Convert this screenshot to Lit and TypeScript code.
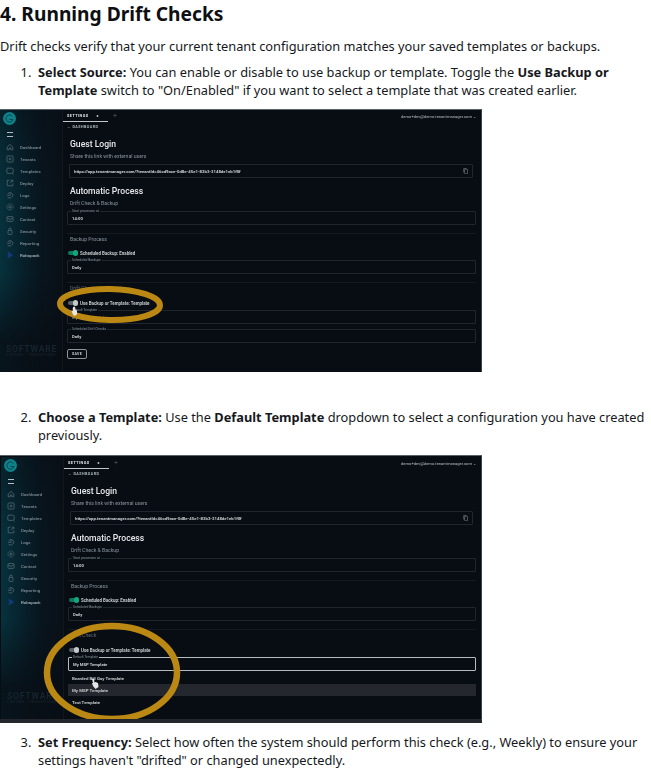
import { LitElement, html, css, svg } from "lit";
import { customElement, property } from "lit/decorators.js";

const icons = [
  svg`<path d="M1.5 5 5 1.800 8.500 5v3.500H6V6.200H4v2.300H1.500z"/>`,
  svg`<rect x="1.200" y="1.200" width="7.600" height="7.600" rx="1"/><path d="M5 3.300v3.400M3.300 5h3.400"/>`,
  svg`<path d="M2.500 1.500h4.500a2 2 0 0 1 2 2v2.500a2 2 0 0 1-2 2H2.500a1.500 1.500 0 0 1-1.500-1.500v-3a2.500 2.500 0 0 1 1.500-2.500z"/><path d="M8 8 9.500 9.500"/>`,
  svg`<path d="M8.500 5.500v3h-7v-7h3M5 5l3.500-3.500M6 1.500h2.500V4"/>`,
  svg`<path d="M2 4a3.300 3.300 0 1 1 5.500 3.500"/><path d="M1.500 5.500h4M2 8.500h5M5 3v2"/>`,
  svg`<circle cx="5" cy="5" r="1.500"/><circle cx="5" cy="5" r="3.800" stroke-dasharray="1.500 .6"/>`,
  svg`<rect x="1.200" y="2" width="7.600" height="6" rx="1"/><path d="m1.500 3.500 3.500 2.200 3.500-2.200"/>`,
  svg`<rect x="2.500" y="4.300" width="5" height="5" rx="1"/><path d="M3.500 4.300V2.800a1.500 1.500 0 0 1 3 0v1.500"/>`,
  svg`<path d="M2 4a3.300 3.300 0 1 1 5.500 3.500"/><path d="M1.500 5.500h4M2 8.500h5M5 3v2"/>`,
  svg`<path class="play" d="M2.500 1 8.500 5l-6 4z"/>`,
];
const nav = ["Dashboard", "Tenants", "Templates", "Deploy", "Logs", "Settings", "Contact", "Security", "Reporting", "Robopack"];

@customElement("app-shot")
class AppShot extends LitElement {
  @property({ type: Boolean }) open = false;
  static styles = css`
    :host { display: block; width: 482px; background: #fff; }
    .frame { position: relative; display: grid; grid-template-columns: 63px 1fr; background: #080d14; overflow: hidden; line-height: normal;
      border-top: 1px solid #59626b; border-right: 1px solid #3a424a; box-sizing: border-box; font-family: Roboto, sans-serif; color: #dfe3e6; filter: blur(.5px); }
    .frame.open { height: 268px; padding: 1px 0 0 1px; border-bottom: 4px solid #23272c; }
    .frame.closed { height: 263px; }
    aside { background: linear-gradient(180deg, rgba(8,13,20,.45) 0, rgba(8,13,20,0) 30%, rgba(8,13,20,0) 62%, rgba(8,13,20,.8) 88%),
        linear-gradient(90deg, #06323d 0%, #07212c 35%, #08151e 65%, #0a1018 100%); border-right: 1px solid #11171e;
      display: flex; flex-direction: column; position: relative; }
    .logo { width: 13px; height: 13px; margin: 2px 0 0 3px; display: block; }
    .burger { width: 6px; height: 3px; margin: 7px 0 0 7px; border-top: 1px solid #b4bcc2; border-bottom: 1px solid #b4bcc2; }
    ul { list-style: none; margin: 4px 0 0; padding: 0; }
    li { height: 12.05px; display: flex; align-items: center; gap: 6.500px; padding-left: 5.500px; font-size: 4.400px; font-weight: 500; color: #7f8c94; }
    li svg { width: 8px; height: 8px; fill: none; stroke: #66767e; stroke-width: .8; flex: none; }
    li svg .play { fill: #123a78; stroke: #123a78; }
    li.last { color: #a6b0b6; }
    .mark { position: absolute; left: 6px; top: 236px; font: 700 8.500px/7px Roboto, sans-serif; letter-spacing: .85px; color: #17242d; white-space: nowrap; }
    .mark small { display: block; font: 500 3px/4px Roboto, sans-serif; letter-spacing: .7px; color: #1c2831; }
    main { padding-right: 5px; display: flex; flex-direction: column; position: relative; min-width: 0; }
    .top { height: 12px; display: flex; align-items: center; justify-content: space-between; }
    .tabs { display: flex; gap: 5px; align-items: center; color: #626c73; font-size: 7px; font-weight: 300; }
    .tab { width: 45px; height: 12px; box-sizing: border-box; padding-left: 4px; border-bottom: 1px solid #c2c7cb; display: flex; align-items: center; gap: 8px;
      color: #dfe3e6; font-size: 3.800px; font-weight: 700; letter-spacing: .45px; }
    .user { font-size: 4.100px; color: #b7bec3; white-space: nowrap; }
    .crumb { height: 10px; display: flex; align-items: center; padding-left: 4px; gap: 3px; font-size: 3.700px; font-weight: 700; letter-spacing: .45px; color: #aeb6bb; }
    .content { padding-left: 4px; display: flex; flex-direction: column; }
    h2 { margin: 0 0 0 3px; font-size: 8.600px; font-weight: 500; color: #e6e9eb; line-height: 12px; }
    h2.first { margin-top: 6px; }
    h2.second { margin-top: 7px; }
    .sub { margin: 2px 0 0 3px; font-size: 5.150px; color: #8a949b; line-height: 8px; white-space: nowrap; }
    .sub.head { margin-top: 1px; }
    .dim { color: #5f676d; }
    .field { height: 14px; box-sizing: border-box; border: 1px solid #20262d; border-radius: 1px; display: flex; align-items: center; justify-content: space-between;
      padding: 0 4px; position: relative; font-size: 4.200px; font-weight: 700; color: #c8cdd0; margin-top: 3px; }
    .field b { position: absolute; left: 3px; top: -2px; background: #080d14; padding: 0 1px; font-size: 3.300px; line-height: 3px; font-weight: 400; color: #8a949b; }
    .field.url { margin: 4px 3px 0 2px; font-size: 4.270px; white-space: nowrap; }
    .url svg { width: 5px; height: 6px; fill: none; stroke: #9ea6ab; stroke-width: .8; }
    .f1 { margin-top: 4px; }
    .f4 { margin-top: 5px; }
    .faded { color: #7c8286; }
    .rule { height: 1px; background: #141a20; margin-top: 8px; }
    .toggle { height: 8px; display: flex; align-items: center; gap: 2px; font-size: 4.450px; font-weight: 700; color: #c4c9cc; padding-left: 1px; white-space: nowrap; }
    .sw { width: 10px; height: 3.500px; border-radius: 2px; position: relative; background: #0c7a60; }
    .sw::after { content: ""; position: absolute; right: 0; top: -1px; width: 5.500px; height: 5.500px; border-radius: 50%; background: #14a67c; }
    .sw.off { background: #5a6167; }
    .sw.off::after { background: #c5c9cc; }
    .t1 { margin-top: 6px; }
    .t2 { margin-top: 7px; }
    .save { margin-top: 6px; width: 20px; height: 10px; box-sizing: border-box; border: 1px solid #8d959a; border-radius: 2px; display: grid; place-items: center; font-size: 3.600px; font-weight: 700; letter-spacing: .3px; color: #c7ccd0; }
    .active { border-color: #b4babe; }
    .menu { margin-top: 1px; font-size: 4.400px; font-weight: 700; color: #bfc4c8; }
    .menu div { height: 12px; display: flex; align-items: center; padding-left: 4px; }
    .menu .sel { background: #24282e; }
    .ring { position: absolute; left: 0; top: 0; pointer-events: none; fill: none; stroke: #ba8813; }
    .hand { fill: #e4e6e8; stroke: none; }
  `;
  render() {
    const o = this.open;
    return html`<div class="frame ${o ? "open" : "closed"}">
      <aside>
        <svg class="logo" viewBox="0 0 13 13"><circle cx="6.500" cy="6.500" r="6.500" fill="#0e8288"/><path d="M9.500 4.500A3.600 3.600 0 1 0 10 7.500H6.500" fill="none" stroke="#0b4550" stroke-width="1"/></svg>
        <div class="burger"></div>
        <ul>${nav.map((n, i) => html`<li class=${i === 9 ? "last" : ""}><svg viewBox="0 0 10 10">${icons[i]}</svg>${n}</li>`)}</ul>
        <div class="mark">SOFTWARE<small>CONTROL · TRANSITIONS</small></div>
      </aside>
      <main>
        <div class="top">
          <div class="tabs"><div class="tab">SETTINGS <span>x</span></div>+</div>
          <div class="user">demo+dev@demo.tenantmanager.com ⌄</div>
        </div>
        <div class="crumb">← DASHBOARD</div>
        <div class="content">
          <h2 class="first">Guest Login</h2>
          <p class="sub">Share this link with external users</p>
          <div class="field url">https://app.tenantmanager.com/?tenantId=46cd9ace-0d8e-45e1-83b3-3148de1eb1f0f
            <svg viewBox="0 0 8 10"><rect x="2.500" y="2" width="5" height="7.500" rx="1"/><path d="M1 7.500V1h4.500"/></svg></div>
          <h2 class="second">Automatic Process</h2>
          <p class="sub">Drift Check &amp; Backup</p>
          <div class="field f1"><b>Start processes at</b>14:00</div>
          <div class="rule"></div>
          <p class="sub head">Backup Process</p>
          <div class="toggle t1"><span class="sw"></span>Scheduled Backup: Enabled</div>
          <div class="field"><b>Scheduled Backups</b>Daily</div>
          <div class="rule"></div>
          <p class="sub head dim">Drift Check</p>
          <div class="toggle t2"><span class="sw off"></span>Use Backup or Template: Template</div>
          <div class="field ${o ? "active" : "faded"}"><b>Default Template</b>My MSP Template</div>
          ${o
            ? html`<div class="menu"><div>Bearded Bill Guy Template</div><div class="sel">My MSP Template</div><div>Test Template</div></div>`
            : html`<div class="field f4"><b>Scheduled Drift Checks</b>Daily</div><div class="save">SAVE</div>`}
        </div>
      </main>
      ${o
        ? svg`<svg class="ring" width="482" height="268" stroke-width="6.500"><ellipse cx="112" cy="216.500" rx="65" ry="46.500"/><path class="hand" d="M92 223l2-.500.500 4 1-.500 2.500 1 .500 4-3 2-2.500-3-1-3 1 0z"/></svg>`
        : svg`<svg class="ring" width="482" height="263" stroke-width="6"><ellipse cx="110" cy="194.500" rx="50" ry="15.500" transform="rotate(1 110 194.500)"/><path class="hand" d="M73 197l2-.500.500 3 1.500 1 0 4-3 1.500-1.500-2.500-1-3 1.500.500z"/></svg>`}
    </div>`;
  }
}

@customElement("app-root")
class AppRoot extends LitElement {
  static styles = css`
    :host { display: block; width: 651px; height: 768px; overflow: hidden; background: #fff; color: #16181c; font-family: "Noto Sans", sans-serif; font-size: 12.800px; line-height: 18px; }
    h1 { margin: 0; padding-top: 2px; font-size: 19.200px; line-height: 24px; font-weight: 700; color: #0d0f12; }
    p { margin: 11px 0 0; }
    ol { margin: 8px 0 0; padding: 0 0 0 38px; }
    li::marker { content: counter(list-item) ".  "; }
    b { font-weight: 700; }
    .a { margin: 10px 0 36px -38px; }
    .b { margin: 11px 0 10px -38px; }
  `;
  render() {
    return html`
      <h1>4. Running Drift Checks</h1>
      <p>Drift checks verify that your current tenant configuration matches your saved templates or backups.</p>
      <ol>
        <li><b>Select Source:</b> You can enable or disable to use backup or template. Toggle the <b>Use Backup or Template</b> switch to "On/Enabled" if you want to select a template that was created earlier.
          <app-shot class="a"></app-shot></li>
        <li><b>Choose a Template:</b> Use the <b>Default Template</b> dropdown to select a configuration you have created previously.
          <app-shot class="b" open></app-shot></li>
        <li><b>Set Frequency:</b> Select how often the system should perform this check (e.g., Weekly) to ensure your settings haven't "drifted" or changed unexpectedly.</li>
      </ol>`;
  }
}
